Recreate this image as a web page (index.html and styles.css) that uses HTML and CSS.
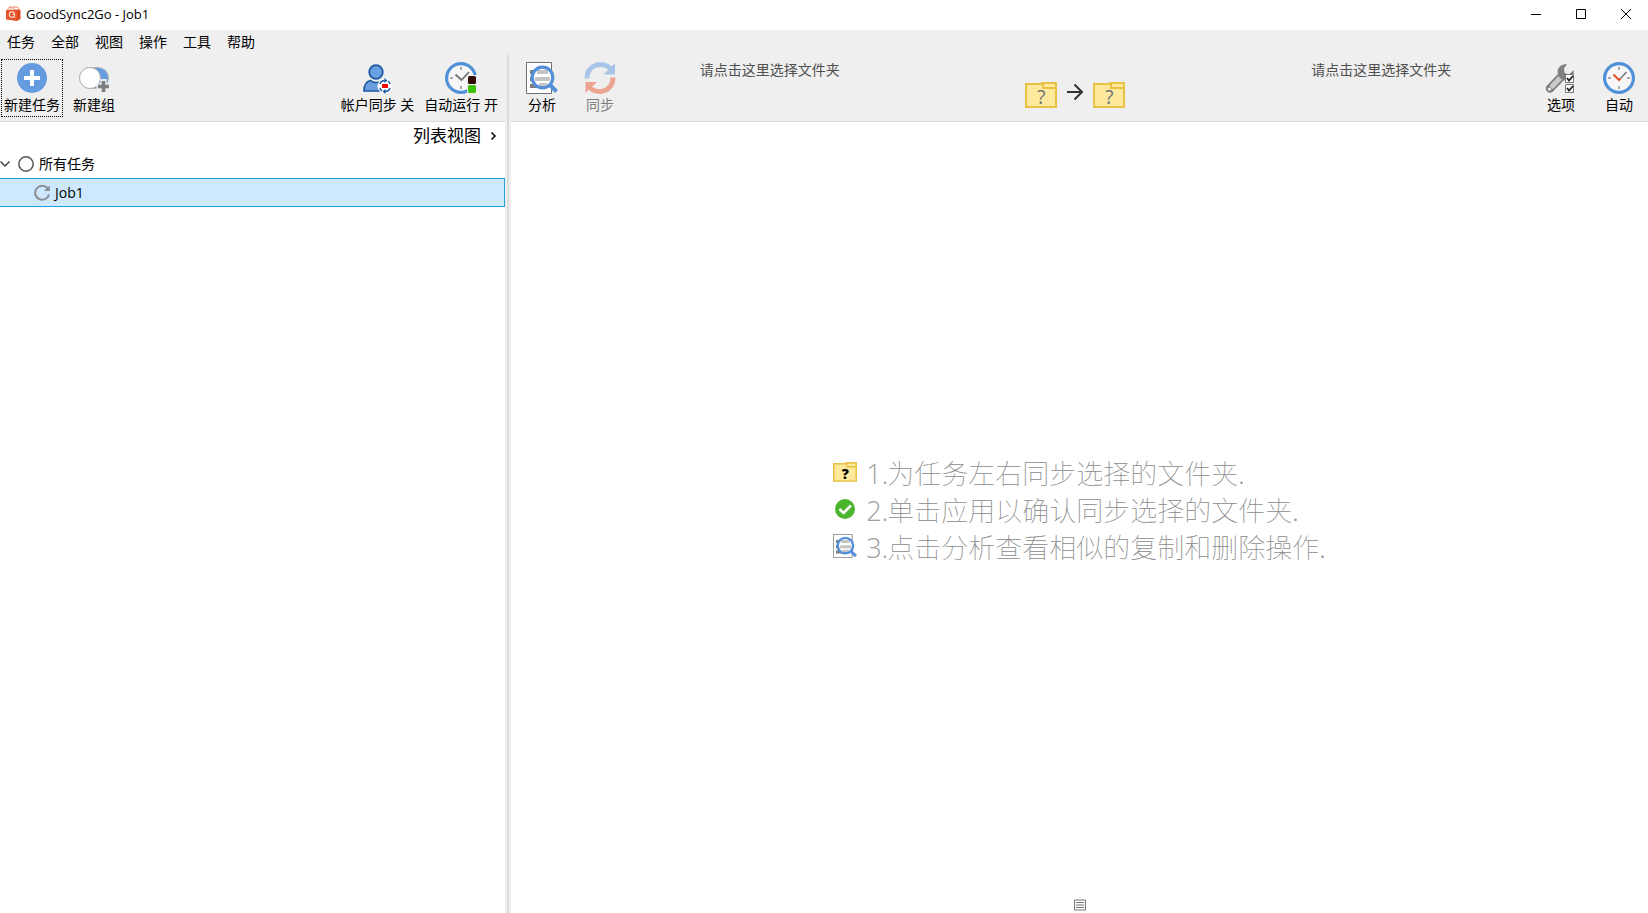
FILE: index.html
```html
<!DOCTYPE html>
<html lang="zh-CN">
<head>
<meta charset="utf-8">
<title>GoodSync2Go - Job1</title>
<link rel="stylesheet" href="styles.css">
</head>
<body>
<svg class="defs" width="0" height="0" aria-hidden="true">
  <symbol id="folder" viewBox="0 0 32 26">
    <path d="M1 2h16V1h14v24H1z" fill="#ffe99c" stroke="#e8c244" stroke-width="2"/>
    <path d="M18 1h13v5H18z" fill="#ffe99c" stroke="#e8c244" stroke-width="2"/>
  </symbol>
  <symbol id="analyze" viewBox="0 0 32 32">
    <path d="M.5.5h25v31H.5z" fill="#fff" stroke="#707070"/>
    <path d="M4 10h18M4 17h18M4 24h17" stroke="#7d7d7d" stroke-width="4"/>
    <circle cx="16.500" cy="15.500" r="10.500" fill="#fff"/>
    <path d="M11 10h11M9 17h15M13 23h8" stroke="#c4c4c4" stroke-width="4"/>
    <circle cx="16.500" cy="15.500" r="10.300" fill="none" stroke="#548fd9" stroke-width="3.200"/>
    <path d="M24 23l6.500 6.500" stroke="#548fd9" stroke-width="4"/>
  </symbol>
</svg>
<div class="window">
  <header class="titlebar">
    <svg class="logo" width="16" height="16" viewBox="0 0 16 16">
      <path d="M3 4V2.500L5 1h7l2 1.500V4M6 3.500V1M9 3.500V1" fill="none" stroke="#ee8768"/>
      <path d="M1 4l11-.5V15L1 13.500z" fill="#e8552d"/>
      <path d="M12 3.500L15.500 4v9L12 15z" fill="#d94a22"/>
      <path d="M9.500 8.500a2.600 2.600 0 1 0-2.600 2.600h2.600V8.500H7.500" fill="none" stroke="#fbd9cd" stroke-width="1.100"/>
    </svg>
    <h1 class="title">GoodSync2Go - Job1</h1>
    <button class="winbtn" aria-label="最小化"><svg width="12" height="12" viewBox="0 0 12 12"><path d="M1 6.500h10"/></svg></button>
    <button class="winbtn" aria-label="最大化"><svg width="12" height="12" viewBox="0 0 12 12"><path d="M1.500 1.500h9v9h-9z"/></svg></button>
    <button class="winbtn" aria-label="关闭"><svg width="12" height="12" viewBox="0 0 12 12"><path d="M1 1l10 10M11 1L1 11"/></svg></button>
  </header>
  <nav class="menubar">
    <button>任务</button><button>全部</button><button>视图</button><button>操作</button><button>工具</button><button>帮助</button>
  </nav>
  <div class="panes">
    <aside class="left">
      <div class="toolbar">
        <button class="tool focused">
          <svg width="32" height="32" viewBox="0 0 32 32"><circle cx="16" cy="16" r="15" fill="#659cdf"/><path d="M16 8v16M8 16h16" stroke="#fff" stroke-width="4"/></svg>
          新建任务
        </button>
        <button class="tool group">
          <svg width="32" height="32" viewBox="0 0 32 32">
            <rect x="1.500" y="5.500" width="29" height="21" rx="10.500" fill="#659cdf" stroke="#b4b4b4"/>
            <circle cx="12" cy="16" r="10.500" fill="#fff" stroke="#b4b4b4"/>
            <path d="M25.500 17v15M18.500 24.500H32" stroke="#efefef" stroke-width="6"/>
            <path d="M25.500 19v11M20 24.500h11" stroke="#7d7d7d" stroke-width="3.600"/>
          </svg>
          新建组
        </button>
        <span class="spacer"></span>
        <button class="tool">
          <svg width="32" height="32" viewBox="0 0 32 32">
            <path d="M2 29q0-9 6.500-10.500Q11 21 15 20.500q3 0 5.500-2 4 2 4 10.500z" fill="#6a9fe0" stroke="#1c57a0" stroke-width="1.700"/>
            <circle cx="14" cy="10" r="6.800" fill="#6a9fe0" stroke="#1c57a0" stroke-width="1.700"/>
            <circle cx="23" cy="24" r="7.500" fill="#fff"/>
            <path d="M18 22q1-3.500 5-3.500M28 26q-1 3.500-5 3.500M18 26q.5 2 2 3M28 22q-.5-2-2-3" fill="none" stroke="#1c57a0" stroke-width="1.500"/>
            <path d="M22.500 16l3 2.500-3 2.500zM23.500 27l-3 2.500 3 2.500z" fill="#1c57a0"/>
            <path d="M20 22h6v4h-6z" fill="#f00"/>
          </svg>
          帐户同步 关
        </button>
        <button class="tool">
          <svg width="32" height="32" viewBox="0 0 32 32">
            <circle cx="16" cy="16" r="14.400" fill="#f7f7f7" stroke="#4f91d8" stroke-width="3.200"/>
            <path d="M16 5v3M16 24v3M5 16h3" stroke="#aaa" stroke-width="2"/>
            <path d="M10.500 12.500l6 5.500 7.500-8" fill="none" stroke="#707070" stroke-width="1.700"/>
            <path d="M22 13h10v19H22z" fill="#efefef"/>
            <rect x="23" y="14" width="8" height="8" rx="1.500" fill="#2e0d0a"/>
            <rect x="23" y="23" width="8" height="8" rx="1.500" fill="#3cc40a"/>
          </svg>
          自动运行 开
        </button>
      </div>
      <div class="viewrow"><button class="viewbtn">列表视图
        <svg width="7" height="10" viewBox="0 0 7 10"><path d="M1.500 1.500L5 5 1.500 8.500" fill="none" stroke="#111" stroke-width="1.700"/></svg></button></div>
      <ul class="tree">
        <li class="row root">
          <svg width="10" height="8" viewBox="0 0 10 8"><path d="M.5 1.500L5 6l4.500-4.500" fill="none" stroke="#444" stroke-width="1.500"/></svg>
          <svg class="state" width="16" height="16" viewBox="0 0 16 16"><circle cx="8" cy="8" r="7.200" fill="none" stroke="#555" stroke-width="1.500"/></svg>
          <span>所有任务</span>
        </li>
        <li class="row job">
          <svg width="17" height="16" viewBox="0 0 17 16"><path d="M14 3.800A7 7 0 1 0 15 9.500" fill="none" stroke="#8c8f93" stroke-width="2"/><path d="M15.800.5V6H10z" fill="#8c8f93"/></svg>
          <span>Job1</span>
        </li>
      </ul>
    </aside>
    <div class="splitter"></div>
    <main class="right">
      <div class="toolbar">
        <button class="tool narrow">
          <svg width="32" height="32"><use href="#analyze"/></svg>
          分析
        </button>
        <button class="tool narrow" disabled>
          <svg width="32" height="32" viewBox="0 0 32 32">
            <path d="M3 16.500C3 2 19-1 26.500 6.500" fill="none" stroke="#a9c5ea" stroke-width="5"/>
            <path d="M31 1v11.500H19.500z" fill="#a9c5ea"/>
            <path d="M29 15.500C29 30 13 33 5.500 25.500" fill="none" stroke="#eda592" stroke-width="5"/>
            <path d="M1.500 31V20H13z" fill="#eda592"/>
          </svg>
          同步
        </button>
        <div class="sides">
          <button class="pick">请点击这里选择文件夹</button>
          <div class="direction">
            <button class="folder" aria-label="左侧文件夹"><svg width="32" height="26"><use href="#folder"/></svg><span>?</span></button>
            <svg class="arrow" width="18" height="18" viewBox="0 0 18 18"><path d="M1 9h15M8.500 1.500L16 9l-7.500 7.500" fill="none" stroke="#333" stroke-width="2"/></svg>
            <button class="folder" aria-label="右侧文件夹"><svg width="32" height="26"><use href="#folder"/></svg><span>?</span></button>
          </div>
          <button class="pick">请点击这里选择文件夹</button>
        </div>
        <button class="tool narrow">
          <svg width="32" height="32" viewBox="0 0 32 32">
            <path d="M5 26.500L17 14" stroke="#808080" stroke-width="8.500" stroke-linecap="round"/>
            <path d="M7.500 24L16.500 14.500" stroke="#cbcbcb" stroke-width="5" stroke-linecap="round"/>
            <path d="M22 2q-8 0-9.500 7 0 5 3.500 8 4 2.500 8 1 5-2 5-10l-5 4.500-4.500-1.500-.5-4.500z" fill="#808080"/>
            <circle cx="4.500" cy="27" r="1.600" fill="#f4f4f4"/>
            <path d="M20.500 12.500h8v8h-8zM20.500 22.500h8v8h-8z" fill="#fff" stroke="#777"/>
            <path d="M22 16l2 2.500 4-4.500M22 26l2 2.500 4-4.500" fill="none" stroke="#222" stroke-width="1.800"/>
          </svg>
          选项
        </button>
        <button class="tool narrow">
          <svg width="32" height="32" viewBox="0 0 32 32">
            <circle cx="16" cy="16" r="14.400" fill="#f7f7f7" stroke="#4f91d8" stroke-width="3.200"/>
            <path d="M16 5v3M16 24v3M5 16h3M24 16h3" stroke="#aaa" stroke-width="2"/>
            <path d="M16 18l7.500-8" stroke="#777" stroke-width="1.500"/>
            <path d="M10.500 12.500L16 18l1.500-1.500" fill="none" stroke="#e8552d" stroke-width="2"/>
          </svg>
          自动
        </button>
      </div>
      <section class="content">
        <ol class="steps">
          <li><span class="folder small"><svg width="24" height="20"><use href="#folder"/></svg><b>?</b></span><span class="num">1.</span>为任务左右同步选择的文件夹.</li>
          <li><svg width="24" height="24" viewBox="0 0 24 24"><circle cx="12" cy="12" r="10" fill="#4cb52e"/><path d="M6.500 12l4 4 7.500-7.500" fill="none" stroke="#fff" stroke-width="2.600"/></svg><span class="num">2.</span>单击应用以确认同步选择的文件夹.</li>
          <li><svg width="24" height="24"><use href="#analyze"/></svg><span class="num">3.</span>点击分析查看相似的复制和删除操作.</li>
        </ol>
      </section>
      <footer class="bottom">
        <button class="logbtn" aria-label="日志"><svg width="12" height="12" viewBox="0 0 12 12"><path d="M.5 1h11v10H.5zM2 3.500h8M2 6h8M2 8.500h8" fill="none" stroke="#777"/></svg></button>
      </footer>
    </main>
  </div>
</div>
</body>
</html>
```
FILE: styles.css
```css
* { box-sizing: border-box; }

body {
  margin: 0;
  background: #fff;
  color: #000;
  font: 14px/20px "Noto Sans", "Noto Sans CJK SC", sans-serif;
}

button {
  padding: 0;
  border: 0;
  background: none;
  color: inherit;
  font: inherit;
}

svg { display: block; flex: none; }

.defs { position: absolute; }

.window {
  display: flex;
  flex-direction: column;
  height: 100vh;
}

.titlebar {
  display: flex;
  align-items: center;
  height: 30px;
  padding: 0 0 2px 5px;
}

.title {
  flex: 1;
  margin: 0 0 0 5px;
  font: 13px/20px "Open Sans", sans-serif;
}

.winbtn {
  display: flex;
  align-items: center;
  justify-content: center;
  width: 45px;
  height: 28px;
}

.winbtn path { fill: none; stroke: #000; }

.menubar {
  display: flex;
  gap: 16px;
  height: 25px;
  padding: 0 7px 2px;
  background: #efefef;
}

.panes {
  display: flex;
  flex: 1;
  min-height: 0;
}

.left {
  display: flex;
  flex-direction: column;
  width: 505px;
}

.splitter {
  width: 6px;
  border: solid #efefef;
  border-width: 0 2px;
  background: #dcdcdc;
}

.right {
  display: flex;
  flex: 1;
  flex-direction: column;
}

.toolbar {
  display: flex;
  height: 67px;
  padding: 4px 2px 4px 1px;
  border-bottom: 1px solid #d9d9d9;
  background: #efefef;
}

.right .toolbar {
  gap: 24px;
  padding: 4px 12px 4px 14px;
}

.tool {
  display: flex;
  flex-direction: column;
  align-items: center;
  gap: 1px;
  height: 58px;
  padding: 3px 5px 0;
  line-height: 20px;
  white-space: nowrap;
}

.tool.focused {
  padding: 2px 2px 0;
  border: 1px dotted #000;
}

.tool.group { margin-left: 5px; }

.tool.narrow {
  width: 34px;
  padding: 3px 0 0;
}

.tool:disabled { color: #808080; }

.spacer { flex: 1; }

.sides {
  display: grid;
  flex: 1;
  grid-template-columns: repeat(3, 1fr);
  justify-items: center;
  align-items: start;
  margin: 0 -14px 0 -24px;
}

.pick {
  margin-top: 1px;
  color: #505050;
}

.direction {
  display: flex;
  align-items: center;
  gap: 9px;
  padding-top: 23px;
}

.arrow { margin-bottom: 6px; }

.folder {
  display: grid;
  place-items: center;
  color: #777;
  font-size: 19px;
}

.folder > * { grid-area: 1 / 1; }
.folder > span { padding-top: 4px; }

.folder.small {
  color: #000;
  font-size: 14px;
  font-family: "Open Sans", sans-serif;
  line-height: 20px;
}

.folder.small b { font-weight: 800; }

.viewrow {
  display: flex;
  justify-content: flex-end;
  height: 27px;
  padding-right: 8px;
}

.viewbtn {
  display: flex;
  align-items: center;
  gap: 9px;
  font-size: 17px;
}

.tree {
  margin: 0;
  padding: 0;
  list-style: none;
}

.row {
  display: flex;
  align-items: center;
  height: 29px;
}

.state { margin: 0 5px 0 8px; }

.job {
  gap: 4px;
  padding-left: 34px;
  border: solid #26a0da;
  border-width: 1px 1px 1px 0;
  background: #cde8ff;
  font-family: "Open Sans", sans-serif;
}

.content {
  display: flex;
  flex: 1;
  align-items: center;
  justify-content: center;
}

.steps {
  margin: 0;
  padding: 0;
  color: #8c8c8c;
  font: 100 27px/37px "Open Sans", "Noto Sans CJK SC", sans-serif;
  list-style: none;
}

.steps li {
  display: flex;
  align-items: center;
}

.steps svg { margin-bottom: 3px; }

.num {
  width: 21px;
  margin-left: 9px;
  color: #a0a0a0;
}

.bottom {
  display: flex;
  justify-content: center;
  height: 14px;
}

.logbtn { height: 12px; }
```
